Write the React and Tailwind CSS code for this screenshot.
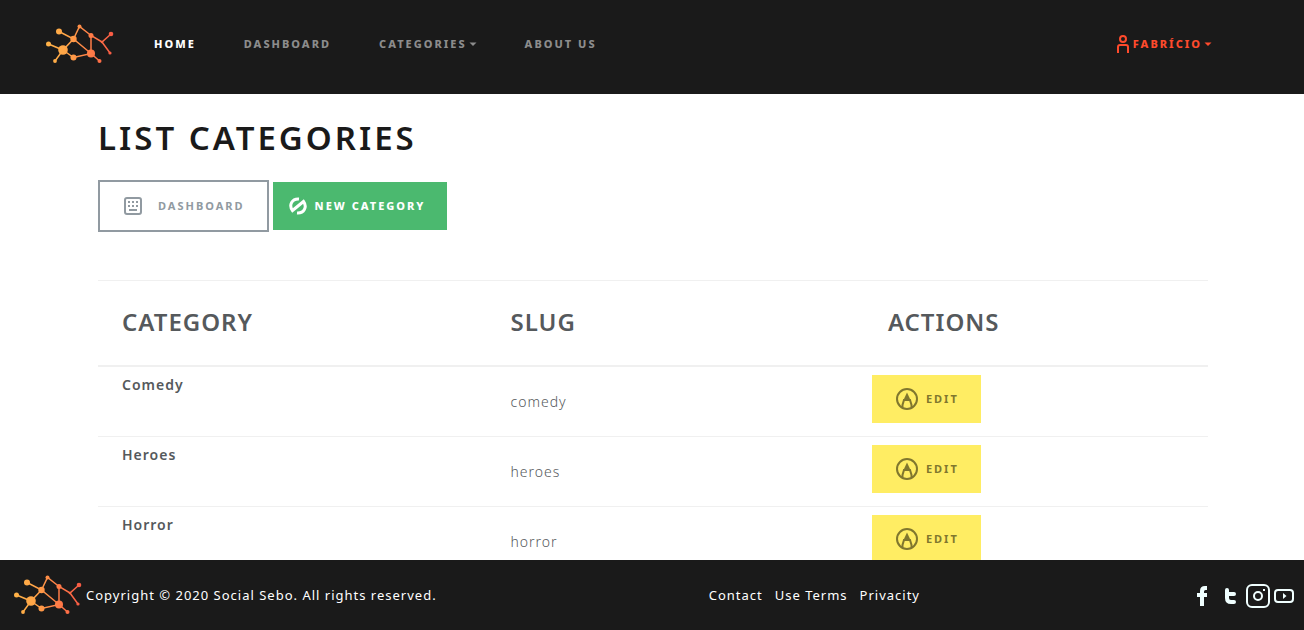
const navLink =
  "inline-flex items-center gap-0.5 text-[11px] leading-4 font-extrabold uppercase tracking-[2px]";

function Logo() {
  return (
    <svg className="h-10 w-17 shrink-0" viewBox="0 0 68 40" role="img" aria-label="Social Sebo">
      <defs>
        <linearGradient id="brand" gradientUnits="userSpaceOnUse" x1="0" y1="0" x2="68" y2="0">
          <stop offset="0" stopColor="#ffb347" />
          <stop offset="0.3" stopColor="#ffa447" />
          <stop offset="0.7" stopColor="#ff7747" />
          <stop offset="1" stopColor="#f75844" />
        </linearGradient>
      </defs>
      <g stroke="url(#brand)" strokeWidth="1.5" fill="none">
        <path d="M13 7.5 27.5 15 33.5 2.5 45 11.5 56 18 65 10M56 18 64 29M45 11.5V29.5L27.5 15 17 26 2.5 20M17 26 9 37M17 26 27.5 33.5 45 29.5 53.5 37" />
      </g>
      <g fill="url(#brand)">
        <circle cx="13" cy="7.5" r="3" />
        <circle cx="27.5" cy="15" r="3.2" />
        <circle cx="33.5" cy="2.5" r="2" />
        <circle cx="45" cy="11.5" r="2.5" />
        <circle cx="56" cy="18" r="1.3" />
        <circle cx="65" cy="10" r="2.3" />
        <circle cx="64" cy="29" r="1.6" />
        <circle cx="45" cy="29.5" r="4" />
        <circle cx="17" cy="26" r="4.8" />
        <circle cx="2.5" cy="20" r="2.5" />
        <circle cx="9" cy="37" r="1.9" />
        <circle cx="27.5" cy="33.5" r="3" />
        <circle cx="53.5" cy="37" r="2" />
      </g>
    </svg>
  );
}

function Caret() {
  return (
    <svg className="h-1 w-2" viewBox="0 0 8 4" aria-hidden="true">
      <path d="M0.5 0.5h7L4 4z" fill="currentColor" />
    </svg>
  );
}

function UserIcon() {
  return (
    <svg className="h-[18px] w-3" viewBox="0 0 12 18" fill="none" stroke="currentColor" strokeWidth="2" aria-hidden="true">
      <circle cx="6" cy="4" r="3" />
      <path d="M1 18v-6q0-2 2-2h6q2 0 2 2v6" />
    </svg>
  );
}

function KeyboardIcon() {
  return (
    <svg className="size-[18px]" viewBox="0 0 18 18" aria-hidden="true">
      <rect x="1" y="1" width="16" height="16" rx="2" fill="none" stroke="currentColor" strokeWidth="2" />
      <path
        fill="currentColor"
        d="M4 4h2v2H4zM8 4h2v2H8zM12 4h2v2h-2zM4 8h2v2H4zM8 8h2v2H8zM12 8h2v2h-2zM5 12h8v2H5z"
      />
    </svg>
  );
}

function LoopIcon() {
  return (
    <svg className="size-[18px]" viewBox="0 0 18 18" fill="none" stroke="currentColor" strokeWidth="3" aria-hidden="true">
      <path d="M10 2C3 1.5 -0.5 8 3.5 13.5L14.5 4.5C18.5 10 15 16.5 8 16" />
    </svg>
  );
}

function PencilIcon() {
  return (
    <svg className="size-[22px]" viewBox="0 0 22 22" fill="none" stroke="currentColor" strokeWidth="2" aria-hidden="true">
      <circle cx="11" cy="11" r="10" />
      <path d="M6.5 19.5V17L8 12H14L15.5 17V19.5" />
      <path d="M11 4.5 15 13H7z" fill="currentColor" stroke="none" />
    </svg>
  );
}

function FacebookIcon() {
  return (
    <svg className="h-5 w-[10px]" viewBox="0 0 10 20" fill="currentColor" aria-hidden="true">
      <path d="M10 0v4H8.5Q7 4 7 5.5V7h3v4H7v9H3v-9H0V7h3V5q0-5 5-5z" />
    </svg>
  );
}

function TwitterIcon() {
  return (
    <svg className="h-4 w-[11px]" viewBox="0 0 11 16" fill="currentColor" aria-hidden="true">
      <path d="M0 2a2 2 0 0 1 4 0v2h5a2 2 0 0 1 0 4H4v2q0 2 2 2h3a2 2 0 0 1 0 4H6q-6 0-6-6z" />
    </svg>
  );
}

function InstagramIcon() {
  return (
    <svg className="size-6" viewBox="0 0 24 24" fill="none" stroke="currentColor" strokeWidth="2" aria-hidden="true">
      <rect x="1" y="1" width="22" height="22" rx="5" />
      <circle cx="12" cy="12" r="4" />
      <path d="M17 5h2v2h-2z" fill="currentColor" stroke="none" />
    </svg>
  );
}

function YoutubeIcon() {
  return (
    <svg className="h-[14px] w-5" viewBox="0 0 20 14" fill="none" stroke="currentColor" strokeWidth="2" aria-hidden="true">
      <path d="M4 1h12q3 0 3 3v6q0 3-3 3H4q-3 0-3-3V4q0-3 3-3z" />
      <path d="M9 4v6l3.5-3z" fill="currentColor" stroke="none" />
    </svg>
  );
}

const categories = [
  { name: "Comedy", slug: "comedy" },
  { name: "Heroes", slug: "heroes" },
  { name: "Horror", slug: "horror" },
];

const social = [
  { label: "Facebook", icon: <FacebookIcon />, width: "w-6" },
  { label: "Twitter", icon: <TwitterIcon />, width: "w-8" },
  { label: "Instagram", icon: <InstagramIcon />, width: "w-6" },
  { label: "YouTube", icon: <YoutubeIcon />, width: "w-7" },
];

const headCell = "border-t border-b-2 border-[#f0f0f0] px-6 pb-0.5 font-semibold";
const bodyCell = "border-b border-[#f0f0f0]";

export default function App() {
  return (
    <div className="flex h-screen flex-col bg-white font-['Noto_Sans','Open_Sans',sans-serif] text-sm tracking-[1px] text-[#55595c]">
      <header className="flex h-[94px] shrink-0 items-center bg-[#1a1a1a] pr-[92px] pb-[6px] pl-[46px]">
        <a href="#home">
          <Logo />
        </a>
        <nav className="ml-10 flex items-center gap-12 text-[#8c8c8c]">
          <a href="#home" className={`${navLink} text-white`}>Home</a>
          <a href="#dashboard" className={navLink}>Dashboard</a>
          <button type="button" className={navLink}>
            Categories <Caret />
          </button>
          <a href="#about" className={navLink}>About us</a>
        </nav>
        <button type="button" className={`${navLink} ml-auto text-[#ff4a2c]`}>
          <UserIcon />
          <span className="ml-0.5">Fabrício</span>
          <Caret />
        </button>
      </header>

      <main className="min-h-0 flex-1 overflow-y-auto pl-0.5 [scrollbar-width:none]">
        <div className="mx-auto max-w-[1110px] pt-6">
          <h1 className="text-[33px] leading-10 font-semibold uppercase tracking-[3px] text-[#1a1a1a]">
            List categories
          </h1>
          <div className="mt-[22px] flex items-center gap-1">
            <a
              href="#dashboard"
              className="flex h-[52px] items-center gap-4 border-2 border-[#919aa1] pr-[22px] pl-6 text-[11px] font-bold uppercase tracking-[2px] text-[#919aa1]"
            >
              <KeyboardIcon />
              Dashboard
            </a>
            <a
              href="#new"
              className="flex h-12 items-center gap-2 bg-[#4bb96f] pr-[22px] pl-4 text-[11px] font-extrabold uppercase tracking-[2px] text-white"
            >
              <LoopIcon />
              New category
            </a>
          </div>

          <table className="mt-12 w-full table-fixed border-separate border-spacing-0 text-left">
            <thead>
              <tr className="h-[87px] text-2xl uppercase">
                <th className={`${headCell} w-[35%]`}>Category</th>
                <th className={`${headCell} w-[34%]`}>Slug</th>
                <th className={`${headCell} w-[31%]`}>Actions</th>
              </tr>
            </thead>
            <tbody>
              {categories.map((item) => (
                <tr key={item.slug} className="h-[70px]">
                  <th scope="row" className={`${bodyCell} px-6 pt-2 align-top font-semibold`}>{item.name}</th>
                  <td className={`${bodyCell} px-6 font-light`}>{item.slug}</td>
                  <td className={`${bodyCell} px-2 pt-2 align-top`}>
                    <button
                      type="button"
                      className="flex h-12 items-center gap-2 bg-[#ffed63] pr-[22px] pl-6 text-[11px] font-bold uppercase tracking-[2px] text-[#80772e]"
                    >
                      <PencilIcon />
                      Edit
                    </button>
                  </td>
                </tr>
              ))}
            </tbody>
          </table>
        </div>
      </main>

      <footer className="flex h-[70px] shrink-0 items-center bg-[#1a1a1a] pr-[6px] pl-[14px] text-[13px] text-white">
        <div className="flex flex-1 items-center gap-1">
          <Logo />
          <p>Copyright © 2020 Social Sebo. All rights reserved.</p>
        </div>
        <nav className="flex gap-3">
          <a href="#contact">Contact</a>
          <a href="#terms">Use Terms</a>
          <a href="#privacy">Privacity</a>
        </nav>
        <div className="ml-[270px] flex items-center pt-0.5 text-[#f0ffff]">
          {social.map((item) => (
            <a key={item.label} href="#social" aria-label={item.label} className={`flex items-center justify-center ${item.width}`}>
              {item.icon}
            </a>
          ))}
        </div>
      </footer>
    </div>
  );
}
